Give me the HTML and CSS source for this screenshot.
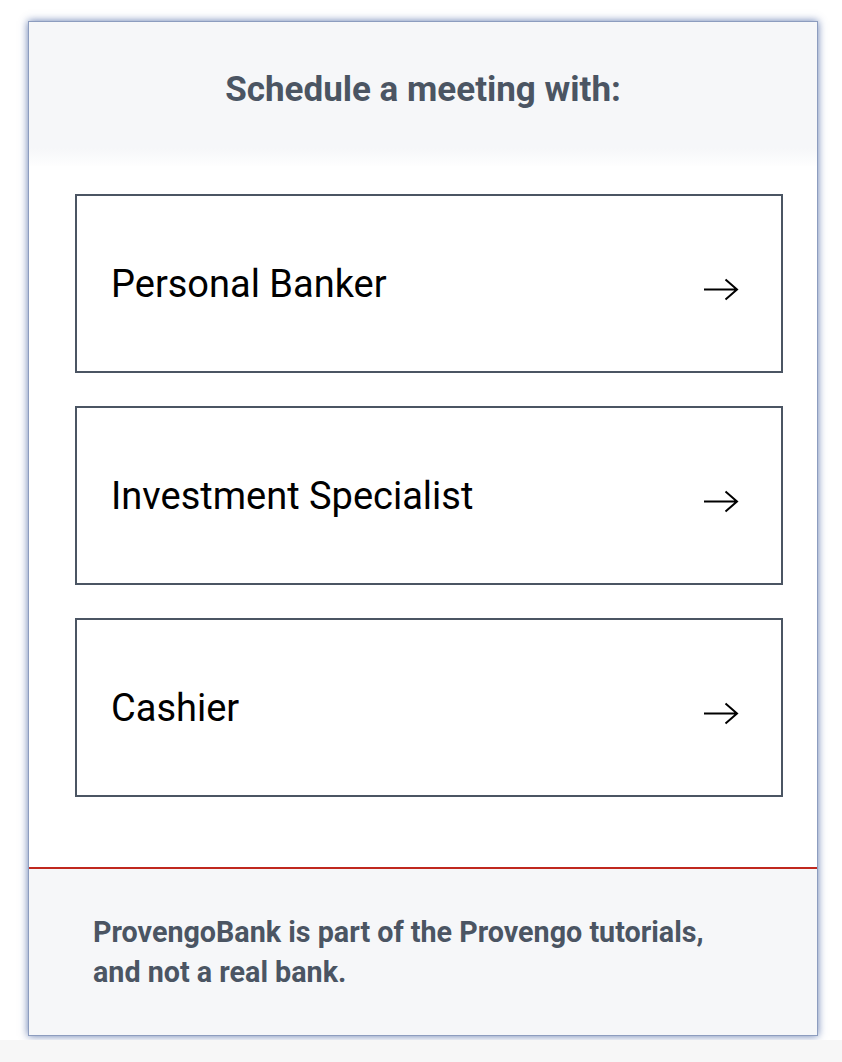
FILE: index.html
```html
<!DOCTYPE html>
<html lang="en">
<head>
<meta charset="utf-8">
<title>Schedule a meeting</title>
<link rel="stylesheet" href="styles.css">
</head>
<body>
<div class="page">
  <div class="card">
    <header class="card-header">
      <h1 class="title">Schedule a meeting with:</h1>
    </header>
    <div class="options">
      <a class="option" href="#"><span class="option-label">Personal Banker</span>
        <svg class="arrow" width="36" height="24" viewBox="0 0 36 24"><path d="M1 11.5H34M22.5 1.5L34 11.5L22.5 21.5" fill="none" stroke="#000" stroke-width="2"/></svg></a>
      <a class="option" href="#"><span class="option-label">Investment Specialist</span>
        <svg class="arrow" width="36" height="24" viewBox="0 0 36 24"><path d="M1 11.5H34M22.5 1.5L34 11.5L22.5 21.5" fill="none" stroke="#000" stroke-width="2"/></svg></a>
      <a class="option" href="#"><span class="option-label">Cashier</span>
        <svg class="arrow" width="36" height="24" viewBox="0 0 36 24"><path d="M1 11.5H34M22.5 1.5L34 11.5L22.5 21.5" fill="none" stroke="#000" stroke-width="2"/></svg></a>
    </div>
    <footer class="card-footer">
      <p class="note">ProvengoBank is part of the Provengo tutorials,<br>and not a real bank.</p>
    </footer>
  </div>
</div>
</body>
</html>
```
FILE: styles.css
```css
html {
  background: #f7f7f7;
}
body {
  margin: 0;
  font-family: Roboto, "Liberation Sans", sans-serif;
}
.page {
  background: #fff;
  padding: 21px 24px 4px 28px;
}
.card {
  border: 1px solid #8d9dbf;
  box-shadow: 0 0 8px rgba(50, 80, 150, 0.75);
  background: #fff;
  display: flex;
  flex-direction: column;
  height: 1015px;
  box-sizing: border-box;
}
.card-header {
  height: 144px;
  flex: none;
  box-sizing: border-box;
  padding-top: 48px;
  background: linear-gradient(to bottom, #f6f7f9 0, #f6f7f9 126px, #ffffff 146px);
}
.title {
  margin: 0;
  text-align: center;
  font-size: 35px;
  line-height: 40px;
  font-weight: 700;
  color: #4b5563;
}
.options {
  display: flex;
  flex-direction: column;
  gap: 33px;
  padding: 28px 34px 0 46px;
  flex: 1;
}
.option {
  display: flex;
  align-items: center;
  justify-content: space-between;
  height: 179px;
  flex: none;
  box-sizing: border-box;
  border: 2px solid #4b5563;
  padding: 0 42px 0 34px;
  text-decoration: none;
  color: #000;
}
.option-label {
  font-size: 38px;
  line-height: 44px;
  font-weight: 400;
}
.arrow {
  display: block;
  margin-top: 12px;
}
.card-footer {
  flex: none;
  border-top: 2px solid #c0281e;
  background: #f6f7f9;
  height: 168px;
  box-sizing: border-box;
  padding: 43px 64px 0;
}
.note {
  margin: 0;
  font-size: 28.7px;
  line-height: 40px;
  font-weight: 700;
  color: #4b5563;
}
```
